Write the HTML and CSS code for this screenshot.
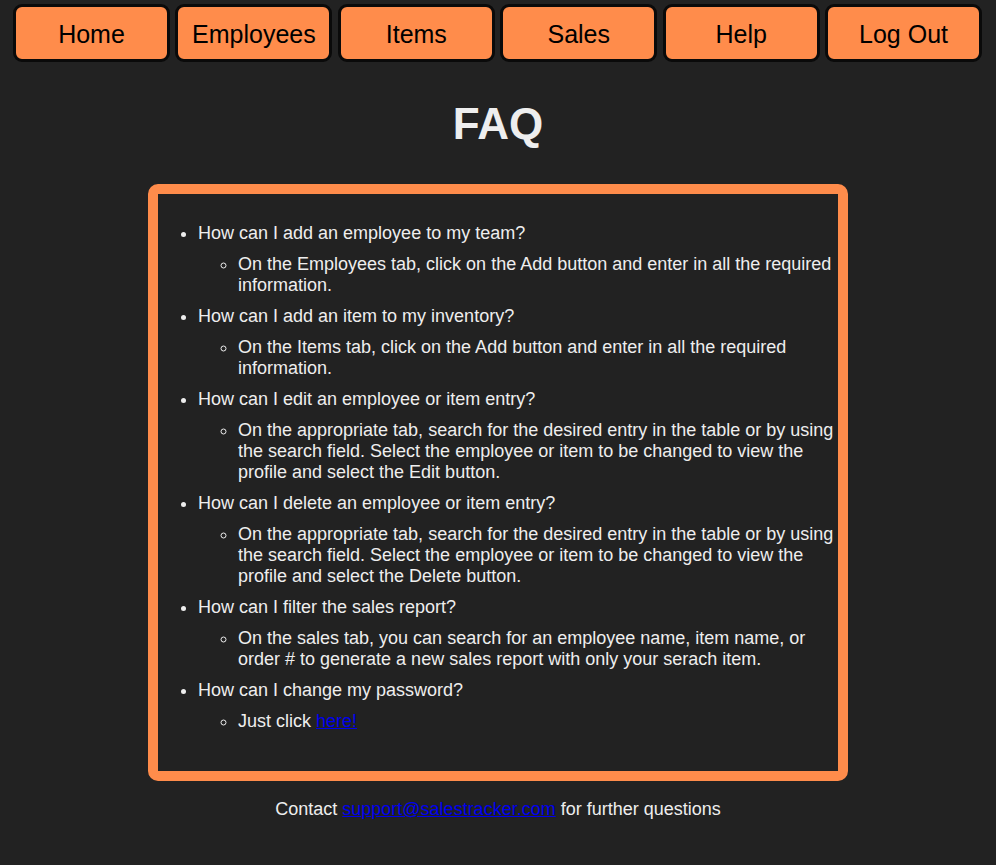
FILE: index.html
```html
<!DOCTYPE html>
<html lang="en">
<head>
<meta charset="utf-8">
<title>FAQ</title>
<link rel="stylesheet" href="styles.css">
</head>
<body>
<nav class="nav">
  <a class="nav-btn" href="#">Home</a>
  <a class="nav-btn" href="#">Employees</a>
  <a class="nav-btn" href="#">Items</a>
  <a class="nav-btn" href="#">Sales</a>
  <a class="nav-btn" href="#">Help</a>
  <a class="nav-btn" href="#">Log Out</a>
</nav>
<h1 class="title">FAQ</h1>
<section class="faq-box">
  <ul class="faq-list">
    <li>How can I add an employee to my team?
      <ul class="answer">
        <li>On the Employees tab, click on the Add button and enter in all the required information.</li>
      </ul>
    </li>
    <li>How can I add an item to my inventory?
      <ul class="answer">
        <li>On the Items tab, click on the Add button and enter in all the required information.</li>
      </ul>
    </li>
    <li>How can I edit an employee or item entry?
      <ul class="answer">
        <li>On the appropriate tab, search for the desired entry in the table or by using the search field. Select the employee or item to be changed to view the profile and select the Edit button.</li>
      </ul>
    </li>
    <li>How can I delete an employee or item entry?
      <ul class="answer">
        <li>On the appropriate tab, search for the desired entry in the table or by using the search field. Select the employee or item to be changed to view the profile and select the Delete button.</li>
      </ul>
    </li>
    <li>How can I filter the sales report?
      <ul class="answer">
        <li>On the sales tab, you can search for an employee name, item name, or order # to generate a new sales report with only your serach item.</li>
      </ul>
    </li>
    <li>How can I change my password?
      <ul class="answer">
        <li>Just click <a class="link" href="#">here!</a></li>
      </ul>
    </li>
  </ul>
</section>
<p class="contact">Contact <a class="link" href="#">support@salestracker.com</a> for further questions</p>
</body>
</html>
```
FILE: styles.css
```css
html, body {
  background: #222222;
}
body {
  margin: 0;
  font-family: "Liberation Sans", Arial, sans-serif;
  color: #eeeeee;
}
.nav {
  display: flex;
  gap: 5.4px;
  padding: 4px 14px 0 13px;
}
.nav-btn {
  flex: 1 1 0;
  height: 50px;
  padding-top: 2px;
  box-sizing: content-box;
  display: flex;
  align-items: center;
  justify-content: center;
  background: #ff8c4b;
  border: 3px solid #0a0a0a;
  border-radius: 9px;
  color: #000;
  text-decoration: none;
  font-size: 25px;
}
.title {
  margin: 37px 0 35px;
  text-align: center;
  font-size: 44px;
  font-weight: bold;
  color: #eeeeee;
}
.faq-box {
  width: 680px;
  margin: 0 auto;
  border: 10px solid #ff8c4b;
  border-radius: 10px;
  padding: 11px 0 21px;
  font-size: 18px;
}
.faq-list {
  margin: 18px 0;
  padding-left: 40px;
  list-style: disc;
}
.answer {
  margin: 10px 0;
  padding-left: 40px;
  list-style: circle;
}
.link {
  color: #0000ee;
  text-decoration: underline;
}
.contact {
  margin: 18px 0;
  text-align: center;
  font-size: 18px;
}
```
